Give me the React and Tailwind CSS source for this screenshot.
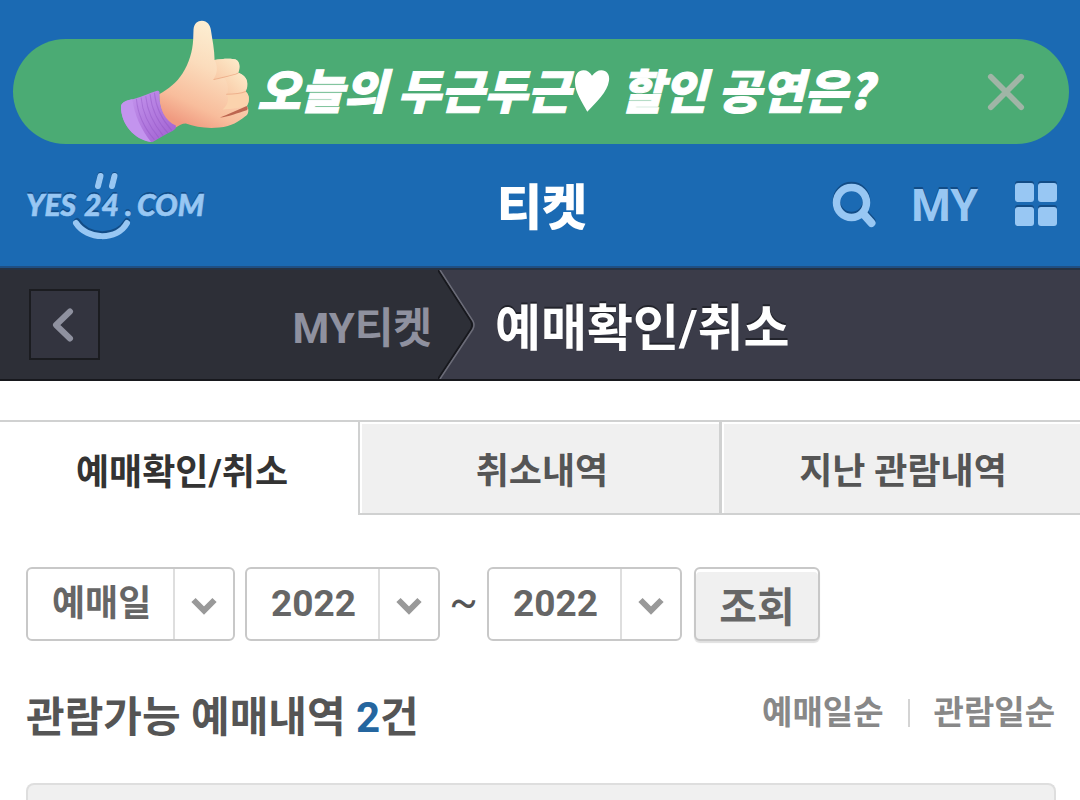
import React from "react";

function ThumbsUp({ className }) {
  return (
    <svg viewBox="50 25 410 380" className={className} aria-hidden="true">
      <defs>
        <linearGradient id="skin" x1="0.75" y1="0" x2="0.35" y2="1">
          <stop offset="0" stopColor="#fdf3d8" />
          <stop offset="0.45" stopColor="#fbdcbc" />
          <stop offset="0.8" stopColor="#f8bd9c" />
          <stop offset="1" stopColor="#f09a80" />
        </linearGradient>
        <linearGradient id="cuff" x1="0" y1="0" x2="1" y2="1">
          <stop offset="0" stopColor="#c79af0" />
          <stop offset="1" stopColor="#a05fd0" />
        </linearGradient>
        <linearGradient id="finger" x1="1" y1="0" x2="0" y2="1">
          <stop offset="0" stopColor="#fdeccb" />
          <stop offset="1" stopColor="#f9c9a6" />
        </linearGradient>
      </defs>
      <path
        d="M176 256C205 240 228 222 246 194C266 162 276 128 278 92L279 62C281 44 291 36 304 36C320 37 329 48 331 64C335 92 342 122 342 154C362 150 390 148 405 152C418 157 420 176 413 192C426 198 440 206 440 224C441 236 438 244 434 248C444 254 446 266 444 278C443 284 441 288 439 291C446 302 444 316 434 322C414 338 394 352 356 356C318 360 284 354 256 344C244 344 236 350 226 356C196 342 176 306 176 256Z"
        fill="url(#skin)"
      />
      <path d="M342 154C362 150 390 148 405 152C420 160 418 186 408 196C388 202 362 206 338 212C352 194 352 172 342 154Z" fill="url(#finger)" />
      <path d="M372 208C388 200 404 196 413 192C434 198 444 218 438 236C434 248 414 254 380 256C384 240 382 222 372 208Z" fill="url(#finger)" />
      <path d="M380 258C400 256 424 252 434 248C448 258 446 280 438 290C420 298 392 300 366 302C380 290 386 274 380 258Z" fill="#fbd3ad" />
      <path d="M340 212C366 204 394 202 412 193" fill="none" stroke="#eeb28d" strokeWidth="3" strokeLinecap="round" />
      <path d="M378 256C402 256 420 254 435 248" fill="none" stroke="#eeb28d" strokeWidth="3" strokeLinecap="round" />
      <path d="M358 326C382 316 412 302 438 291C442 296 442 302 438 304C412 312 382 324 358 326Z" fill="#bd6650" />
      <path d="M62 292C64 280 78 274 100 270C126 264 150 252 170 246C178 246 178 252 177 258C176 300 194 336 226 350C228 358 224 362 216 366C196 376 176 388 158 398C152 400 144 398 136 394C96 384 62 342 62 292Z" fill="url(#cuff)" />
      <path d="M62 292C64 280 76 275 96 271C102 316 122 362 152 399C104 394 60 344 62 292Z" fill="#c394ee" />
      <path
        d="M108 270C112 314 132 358 162 392M122 266C126 310 146 352 175 386M136 262C140 304 160 346 188 380M149 256C153 298 173 340 202 372M162 252C166 294 184 332 214 364"
        fill="none"
        stroke="#8c4fc0"
        strokeWidth="3"
        opacity="0.4"
      />
    </svg>
  );
}

function Logo() {
  return (
    <svg viewBox="0 0 190 76" className="h-[76px] w-[190px]" role="img" aria-label="YES24.COM">
      <g transform="translate(0 -2)" stroke="#124c86" fill="none" strokeLinecap="round">
        <path d="M74.500 10L72.500 19M88.500 10L86.500 19" strokeWidth="6" />
        <path d="M51 56C62 73 90 74 101 56" strokeWidth="6" />
      </g>
      <g fontFamily="Lato, sans-serif" fontWeight="900" fontStyle="italic" fontSize="30">
        <g fill="#124c86">
          <text x="0" y="47">YES</text>
          <text x="58" y="47">24</text>
          <text x="99" y="47">.</text>
          <text x="111" y="47">COM</text>
        </g>
        <g fill="#98c7f3" stroke="#98c7f3" strokeWidth="0.600">
          <text x="0" y="49">YES</text>
          <text x="58" y="49">24</text>
          <text x="99" y="49">.</text>
          <text x="111" y="49">COM</text>
        </g>
      </g>
      <g stroke="#98c7f3" fill="none" strokeLinecap="round">
        <path d="M74.500 9L72 19M88.500 9L86 19" strokeWidth="6" />
        <path d="M50 56C61 73 91 74 101 56" strokeWidth="6" />
      </g>
    </svg>
  );
}

function SelectBox({ label, value, className }) {
  return (
    <div className={`relative h-[74px] rounded-md border-2 border-[#c8c8c8] bg-white font-bold ${className}`}>
      <select
        aria-label={label}
        defaultValue={value}
        className="h-full w-full appearance-none bg-transparent pl-6 leading-[48px] text-[#666]"
      >
        <option>{value}</option>
      </select>
      <span className="pointer-events-none absolute inset-y-0 right-0 flex w-[60px] items-center justify-center border-l-2 border-[#dedede] pt-1">
        <svg viewBox="0 0 26 18" className="h-[18px] w-[26px]" aria-hidden="true">
          <path d="M2.500 3L13 13.500L23.500 3" fill="none" stroke="#999" strokeWidth="6" />
        </svg>
      </span>
    </div>
  );
}

export default function App() {
  return (
    <div className="flex min-h-screen flex-col bg-white font-['Roboto','Noto_Sans_CJK_KR',sans-serif] font-bold">
      <header className="border-b-2 border-[#1f4f84] bg-[#1b6ab3] pt-[39px]">
        <div className="relative mr-[11px] ml-[13px] flex h-[105px] items-center justify-between rounded-full bg-[#4bab74] pr-10 pl-[244px]">
          <ThumbsUp className="absolute bottom-0 left-[104px] h-[127px] w-[137px]" />
          <a
            href="#sale"
            className="flex items-center pb-1.5 text-[47px] leading-[60px] font-black whitespace-nowrap text-white italic font-['Noto_Sans_CJK_KR',sans-serif] [-webkit-text-stroke:1px_white]"
          >
            오늘의 두근두근
            <svg viewBox="0 0 38 46" className="mt-1 ml-1 h-[44px] w-[36px]" role="img" aria-label="♥">
              <path d="M14 45C9 35 1 25 1 13C1 5 5 1 10 1C14 1 17 3 19 7C22 3 25 1 29 1C34 1 38 5 37 12C35 25 24 34 14 45Z" fill="#fff" />
            </svg>
            <span className="ml-2.5">할인 공연은?</span>
          </a>
          <button aria-label="닫기" className="p-1">
            <svg viewBox="0 0 40 40" className="h-[38px] w-[38px]" aria-hidden="true">
              <path d="M4 4L36 36M36 4L4 36" stroke="#a0b5a6" strokeWidth="6" strokeLinecap="round" />
            </svg>
          </button>
        </div>
        <div className="grid h-[122px] grid-cols-[1fr_auto_1fr] items-center px-[22px]">
          <a href="#home" className="pl-1">
            <Logo />
          </a>
          <h1 className="pt-2 pl-1 text-[49px] leading-[60px] font-black text-white">티켓</h1>
          <nav className="flex items-center justify-end gap-[34px]">
            <button aria-label="검색">
              <svg viewBox="0 0 46 48" className="h-[48px] w-[46px]" fill="none" aria-hidden="true">
                <g stroke="#124c86" strokeLinecap="round">
                  <circle cx="20.500" cy="19.500" r="15" strokeWidth="7.500" />
                  <path d="M32 30.500L40.500 40" strokeWidth="8" />
                </g>
                <g stroke="#98c7f3" strokeLinecap="round">
                  <circle cx="20.500" cy="21.500" r="15" strokeWidth="7.500" />
                  <path d="M32 32.500L40.500 42" strokeWidth="8" />
                </g>
              </svg>
            </button>
            <a href="#my" className="pt-0.5 pr-0.5 text-[45px] leading-[52px] font-bold text-[#98c7f3] [text-shadow:0_-2px_0_#124c86]">
              MY
            </a>
            <button aria-label="메뉴">
              <svg viewBox="0 0 44 48" className="h-[48px] w-[44px]" aria-hidden="true">
                <g fill="#124c86">
                  <rect x="1" y="0" width="19" height="20" rx="3" />
                  <rect x="24" y="0" width="19" height="20" rx="3" />
                  <rect x="1" y="24" width="19" height="20" rx="3" />
                  <rect x="24" y="24" width="19" height="20" rx="3" />
                </g>
                <g fill="#98c7f3">
                  <rect x="1" y="2" width="19" height="19" rx="3" />
                  <rect x="24" y="2" width="19" height="19" rx="3" />
                  <rect x="1" y="26" width="19" height="19" rx="3" />
                  <rect x="24" y="26" width="19" height="19" rx="3" />
                </g>
              </svg>
            </button>
          </nav>
        </div>
      </header>

      <nav className="flex h-[113px] border-t-2 border-b-2 border-t-[#253244] border-b-[#17181d] bg-[#3b3c49]">
        <div className="flex w-[438px] items-center justify-between bg-[#2d2f37] pr-1.5 pl-[29px]">
          <button
            aria-label="뒤로"
            className="flex h-[71px] w-[71px] items-center justify-center border-2 border-[#1b1c20] bg-[#33343f] pr-1"
          >
            <svg viewBox="0 0 24 34" className="h-[34px] w-[24px]" aria-hidden="true">
              <path d="M19 3.500L5 17L19 30.500" fill="none" stroke="#8f919f" strokeWidth="6" strokeLinecap="round" strokeLinejoin="round" />
            </svg>
          </button>
          <a href="#myticket" className="pt-2 text-[42px] leading-[52px] text-[#8f919f]">
            MY티켓
          </a>
        </div>
        <svg viewBox="0 0 38 109" preserveAspectRatio="none" className="h-full w-[38px]" aria-hidden="true">
          <path d="M0 0L33 51Q35 55 33 59L0 109Z" fill="#2d2f37" />
          <path d="M0 0L33 51Q35 55 33 59L0 109" fill="none" stroke="#17181d" strokeWidth="2" />
          <path d="M2 0L35 51Q37 55 35 59L2 109" fill="none" stroke="#6b6c78" strokeWidth="1.500" />
        </svg>
        <h2 className="self-center pt-2 pl-[19px] text-[50px] leading-[60px] text-white [text-shadow:0_-2px_0_#22232b]">예매확인/취소</h2>
      </nav>

      <div role="tablist" className="mt-[39px] grid grid-cols-3 border-t-2 border-[#d0d1d1] text-[36px] leading-[48px]">
        <button role="tab" aria-selected="true" className="h-[93px] pt-2 pl-1 text-[#333]">
          예매확인/취소
        </button>
        <button
          role="tab"
          aria-selected="false"
          className="-ml-0.5 h-[93px] border-b-2 border-l-2 border-[#d0d1d1] bg-[#f0f0f0] pt-2 pl-1 text-[#555] shadow-[inset_2px_2px_0_#fff]"
        >
          취소내역
        </button>
        <button
          role="tab"
          aria-selected="false"
          className="-ml-px h-[93px] border-b-2 border-l-3 border-[#d0d1d1] bg-[#f0f0f0] pt-2 pl-1 text-[#555] shadow-[inset_2px_2px_0_#fff]"
        >
          지난 관람내역
        </button>
      </div>

      <form className="mt-[52px] flex items-center pl-[26px]" onSubmit={(e) => e.preventDefault()}>
        <SelectBox label="조회 기준" value="예매일" className="w-[209px] text-[36px]" />
        <SelectBox label="시작 연도" value="2022" className="ml-2.5 w-[195px] text-[37px]" />
        <span className="w-[47px] pb-1 text-center text-[42px] leading-[48px] font-normal text-[#555]">~</span>
        <SelectBox label="종료 연도" value="2022" className="w-[195px] text-[37px]" />
        <button className="ml-3 h-[74px] w-[126px] rounded-md border-2 border-[#c8c8c8] bg-[#f0f0f0] pt-2 text-[41px] leading-[52px] text-[#666] shadow-[inset_0_3px_0_#fff,0_2px_1px_#e0e0e0]">
          조회
        </button>
      </form>

      <div className="mt-[45px] flex h-[62px] items-center justify-between pr-[25px] pl-[26px]">
        <h3 className="pt-0.5 text-[42px] leading-[60px] text-[#555]">
          관람가능 예매내역 <span className="text-[#25669f]">2</span>건
        </h3>
        <div className="flex items-center pb-2 text-[33px] leading-[44px] text-[#888]">
          <a href="#by-booking">예매일순</a>
          <span className="mx-6 h-7 w-0.5 bg-[#d4d4d4]" />
          <a href="#by-show">관람일순</a>
        </div>
      </div>

      <section className="mx-6 mt-[35px] flex flex-1 pl-0.5">
        <div className="flex-1 rounded-t-lg border-2 border-b-0 border-[#dedede] bg-[#f0f0f0]" />
      </section>
    </div>
  );
}
